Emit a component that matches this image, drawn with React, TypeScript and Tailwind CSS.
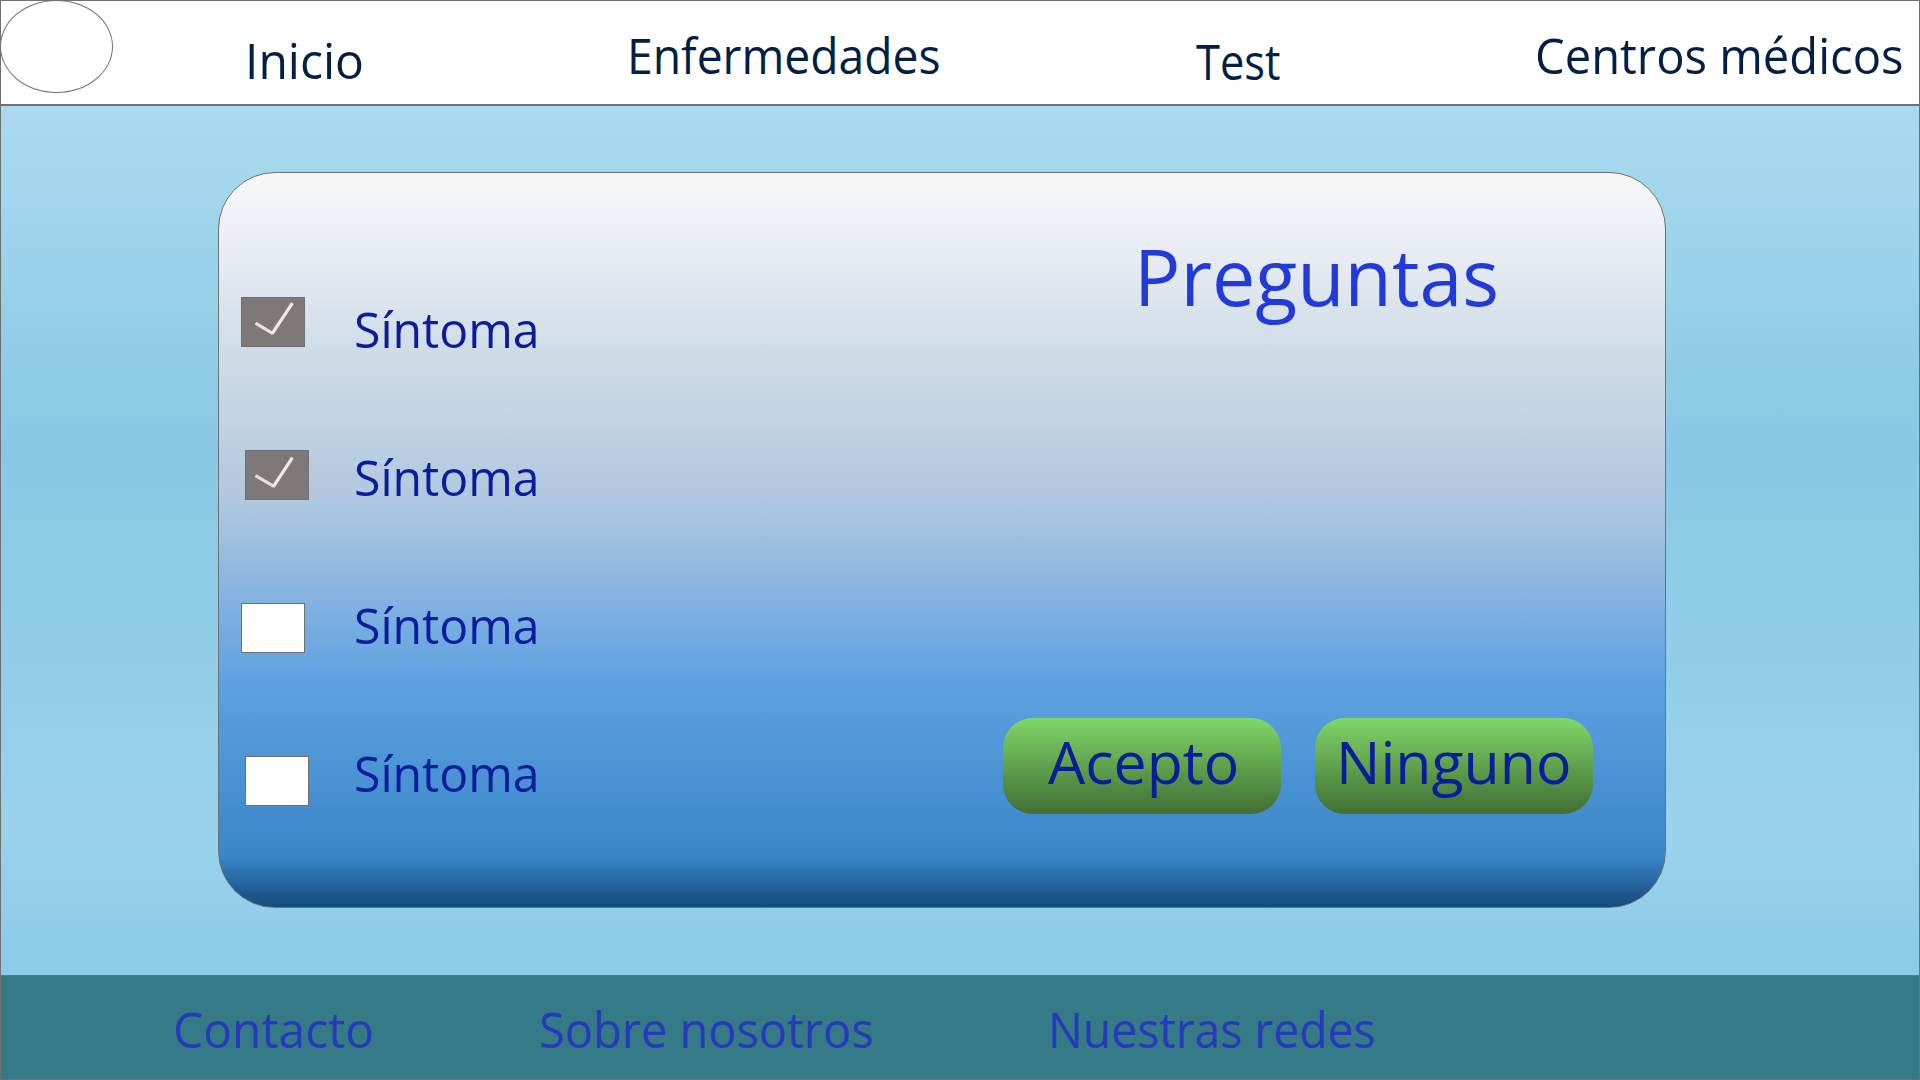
type Mark = { tick: string; stroke: string } | null;

const symptoms: { offset: string; mark: Mark }[] = [
  { offset: 'ml-0', mark: { tick: 'M14.5 26.2 L31.6 36.4', stroke: 'M31 36.8 L51.4 6.2' } },
  { offset: 'ml-1', mark: { tick: 'M10.5 25.6 L29 36.4', stroke: 'M28.2 36.8 L47.4 7.6' } },
  { offset: 'ml-0', mark: null },
  { offset: 'ml-1', mark: null },
];

function Checkbox({ offset, mark }: { offset: string; mark: Mark }) {
  return (
    <div
      role="checkbox"
      aria-checked={mark !== null}
      className={`h-[50px] w-16 shrink-0 border border-[#707070] ${offset} ${mark ? 'bg-[#7f7878]' : 'bg-white'}`}
    >
      {mark && (
        <svg viewBox="0 0 64 50" className="-mt-px -ml-px h-[50px] w-16 max-w-none" fill="none" strokeWidth="3.2">
          <path d={mark.tick} stroke="#eadddd" />
          <path d={mark.stroke} stroke="#f2eaea" />
        </svg>
      )}
    </div>
  );
}

const label = 'block shrink-0 origin-left whitespace-nowrap text-[49px] leading-[64px]';

export default function App() {
  return (
    <div className="flex h-[1080px] w-[1920px] flex-col overflow-hidden font-['Open_Sans',sans-serif] font-normal">
      <header className="flex h-[106px] shrink-0 items-start border border-b-2 border-[#707070] bg-white text-[#021f45]">
        <div className="-mt-px -ml-px h-[93px] w-[113px] shrink-0 rounded-[50%] border border-[#707070] bg-white" />
        <nav className="flex items-start">
          <a className={`${label} mt-[27px] ml-[131.5px] w-[120px] scale-x-[0.98]`}>Inicio</a>
          <a className={`${label} mt-[22px] ml-[262px] w-[334px] scale-x-[0.944]`}>Enfermedades</a>
          <a className={`${label} mt-[28px] ml-[235.5px] w-[96px] scale-x-[0.887]`}>Test</a>
          <a className={`${label} mt-[22px] ml-[243px] w-[380px] scale-x-[0.962]`}>Centros médicos</a>
        </nav>
      </header>

      <main className="flex h-[869px] shrink-0 items-start border-x border-[#707070] bg-[linear-gradient(to_bottom,#abdaf0_0px,#a6d9ed_45px,#9ad2eb_165px,#88c8e4_340px,#9ad2ec_723px,#8ccae8_869px)]">
        <section className="mt-[66px] ml-[217px] flex h-[736px] w-[1448px] shrink-0 items-start rounded-[57px] border border-[#707070] bg-[linear-gradient(to_bottom,#f8f8f8_0%,#e5eaf2_13%,#d2dee8_22.5%,#b1c8df_44%,#5da1e1_69.5%,#3a86c8_93%,#144a7a_100%)]">
          <div className="mt-[124px] ml-[22px] flex w-[68px] shrink-0 flex-col gap-[103px]">
            {symptoms.map((s, i) => (
              <Checkbox key={i} offset={s.offset} mark={s.mark} />
            ))}
          </div>
          <div className="mt-[124px] ml-[45px] flex w-[187px] shrink-0 flex-col gap-[84px] text-[#0c1d9c]">
            {symptoms.map((_, i) => (
              <span key={i} className={`${label} scale-x-[0.983]`}>
                Síntoma
              </span>
            ))}
          </div>
          <div className="ml-[462px] flex shrink-0 flex-col">
            <h1 className="mt-[51px] ml-[131px] w-[370px] origin-left scale-x-[0.977] text-[79px] leading-[103px] whitespace-nowrap text-[#213ad8]">
              Preguntas
            </h1>
            <div className="mt-[391px] flex gap-[34px] text-[59px] leading-[86px] text-[#0c1d9c]">
              <button className="flex h-24 w-[278px] items-start rounded-[30px] bg-linear-to-b from-[#80d868] to-[#416e34] pl-[45px]">
                Acepto
              </button>
              <button className="flex h-24 w-[278px] items-start rounded-[30px] bg-linear-to-b from-[#80d868] to-[#416e34] pl-[21px]">
                Ninguno
              </button>
            </div>
          </div>
        </section>
      </main>

      <footer className="flex h-[105px] shrink-0 items-start border border-[#707070] bg-[#357a87] text-[#2839bb]">
        <a className={`${label} mt-[21px] ml-[171.5px] w-[204px] scale-x-[0.979]`}>Contacto</a>
        <a className={`${label} mt-[21px] ml-[162.5px] w-[348px] scale-x-[0.958]`}>Sobre nosotros</a>
        <a className={`${label} mt-[21px] ml-[161px] w-[344px] scale-x-[0.944]`}>Nuestras redes</a>
      </footer>
    </div>
  );
}
